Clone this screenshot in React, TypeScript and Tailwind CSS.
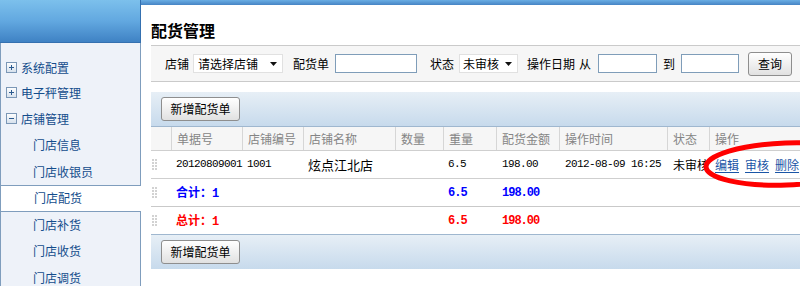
import React from 'react';

const CJK = "font-['Noto_Sans_CJK_SC','Noto_Sans',sans-serif]";
const MONO = "font-['Liberation_Mono',monospace]";

/** Small ⊞ / ⊟ tree toggle box. */
function Toggle({ open }: { open?: boolean }) {
  return (
    <svg width="11" height="11" viewBox="0 0 11 11" className="shrink-0">
      <defs>
        <linearGradient id={open ? 'tgo' : 'tgc'} x1="0" y1="0" x2="0" y2="1">
          <stop offset="0" stopColor="#ffffff" />
          <stop offset="1" stopColor="#d5e0ec" />
        </linearGradient>
      </defs>
      <rect x="0.5" y="0.5" width="10" height="10" fill={`url(#${open ? 'tgo' : 'tgc'})`} stroke="#7b97b6" />
      <rect x="3" y="5" width="5" height="1" fill="#2b5a8f" />
      {!open && <rect x="5" y="3" width="1" height="5" fill="#2b5a8f" />}
    </svg>
  );
}

function Grip() {
  const dots = [];
  for (let r = 0; r < 4; r++)
    for (let c = 0; c < 2; c++)
      dots.push(<rect key={`${r}-${c}`} x={c * 3} y={r * 3} width="2" height="2" fill="#d2d2d2" />);
  return (
    <svg width="5" height="11" viewBox="0 0 5 11" className="ml-[1px]">
      {dots}
    </svg>
  );
}

function Caret() {
  return (
    <svg width="7" height="4" viewBox="0 0 7 4" className="shrink-0">
      <path d="M0 0H7L3.5 4Z" fill="#111" />
    </svg>
  );
}

function Btn({ children, className = '' }: { children: React.ReactNode; className?: string }) {
  return (
    <div
      className={`flex h-[24px] items-center justify-center rounded-[3px] border border-[#8e8e8e] bg-gradient-to-b from-[#ffffff] to-[#e1e1e1] text-[12px] leading-none text-black ${className}`}
    >
      {children}
    </div>
  );
}

function Toolbar({ children }: { children: React.ReactNode }) {
  return (
    <div className="flex h-[34px] shrink-0 items-center bg-gradient-to-b from-[#e7eff6] to-[#c7daec] pl-[10px]">
      {children}
    </div>
  );
}

const SIDE_TOP = [
  { label: '系统配置', h: 'h-[25px]', open: false },
  { label: '电子秤管理', h: 'h-[25px]', open: false },
  { label: '店铺管理', h: 'h-[27px]', open: true },
];

const SIDE_SUB = ['门店信息', '门店收银员', '门店配货', '门店补货', '门店收货', '门店调货'];

const COLS = 'grid grid-cols-[20px_71px_61px_92px_48px_53px_63px_108px_42px_91px]';

const HEAD = ['', '单据号', '店铺编号', '店铺名称', '数量', '重量', '配货金额', '操作时间', '状态', '操作'];

export default function App() {
  return (
    <div className={`relative flex h-[286px] w-[800px] overflow-hidden bg-white ${CJK}`}>
      {/* Sidebar */}
      <aside className="flex w-[141px] shrink-0 flex-col">
        <div className="h-[43px] shrink-0 border-b border-r border-[#3470b0] bg-gradient-to-b from-[#7cc0ec] via-[#62a8e0] to-[#3f82c4]" />
        <div className="flex-1 shrink-0 border-l border-r border-[#7f9dbd] bg-[#eef2f9] pt-[12px] text-[12px] text-[#144d8c]">
          {SIDE_TOP.map((it) => (
            <div key={it.label} className={`flex ${it.h} items-center gap-[4px] pl-[5px]`}>
              <Toggle open={it.open} />
              <span className="leading-none">{it.label}</span>
            </div>
          ))}
          {SIDE_SUB.map((s) =>
            s === '门店配货' ? (
              <div
                key={s}
                className="relative -mr-px -ml-px flex h-[26.5px] items-center border-y border-l border-[#7f9dbd] bg-white pl-[33px]"
              >
                <span className="leading-none">{s}</span>
              </div>
            ) : (
              <div key={s} className="flex h-[26.5px] items-center pl-[32px]">
                <span className="leading-none">{s}</span>
              </div>
            ),
          )}
        </div>
      </aside>

      {/* Main */}
      <main className="flex flex-1 flex-col">
        <div className="h-[5px] shrink-0 bg-gradient-to-b from-[#6aaee4] to-[#4684c4]" />
        <div className="flex-1 bg-white pl-[10px]">
          <div className="flex h-[40px] items-center pt-[10px]">
            <h1 className="text-[16px] font-bold leading-none text-black">配货管理</h1>
          </div>

          {/* Filter row */}
          <div className="flex h-[37px] items-center border-y border-[#cacaca] bg-[#f6f6f6] pl-[14px] text-[12px] leading-none text-black">
            <span>店铺</span>
            <div className="ml-[4px] flex h-[19px] w-[90px] items-center justify-between border border-[#e1e1e1] bg-white pl-[4px] pr-[5px]">
              <span>请选择店铺</span>
              <Caret />
            </div>
            <span className="ml-[10px]">配货单</span>
            <div className="ml-[6px] h-[19px] w-[82px] border border-[#7f9db9] bg-white" />
            <span className="ml-[13px]">状态</span>
            <div className="ml-[5px] flex h-[19px] w-[59px] items-center justify-between border border-[#e1e1e1] bg-white pl-[3px] pr-[5px]">
              <span>未审核</span>
              <Caret />
            </div>
            <span className="ml-[9px]">操作日期</span>
            <span className="ml-[4px]">从</span>
            <div className="ml-[7px] h-[19px] w-[59px] border border-[#7f9db9] bg-white" />
            <span className="ml-[6px]">到</span>
            <div className="ml-[6px] h-[19px] w-[58px] border border-[#7f9db9] bg-white" />
            <Btn className="ml-[9px] w-[44px]">查询</Btn>
          </div>

          <div className="h-[10px]" />

          <Toolbar>
            <Btn className="w-[79px]">新增配货单</Btn>
          </Toolbar>

          {/* Table */}
          <div className="border-t border-[#9fb7cf] text-[12px] leading-none">
            <div className={`${COLS} h-[24px] border-b border-[#cfcfcf] bg-[#f6f6f6] text-[#858585]`}>
              {HEAD.map((h, i) => (
                <div key={i} className={`flex items-center pl-[5px] ${i > 0 ? 'border-l border-[#d6d6d6]' : ''}`}>
                  {h}
                </div>
              ))}
            </div>

            <div className={`${COLS} h-[28px] items-center border-b border-[#cfcfcf] text-black`}>
              <Grip />
              <div className={`pl-[5px] ${MONO} text-[11px] tracking-[-0.6px]`}>20120809001</div>
              <div className={`pl-[5px] ${MONO} text-[11px] tracking-[-0.6px]`}>1001</div>
              <div className="pl-[5px] text-[13px]">炫点江北店</div>
              <div />
              <div className={`pl-[5px] ${MONO} text-[11px] tracking-[-0.6px]`}>6.5</div>
              <div className={`pl-[6px] ${MONO} text-[11px] tracking-[-0.6px]`}>198.00</div>
              <div className={`pl-[6px] ${MONO} text-[11px] tracking-[-0.6px] whitespace-nowrap`}>2012-08-09 16:25</div>
              <div className="whitespace-nowrap pl-[6px]">未审核</div>
              <div className="flex gap-[6px] whitespace-nowrap pl-[6px] text-[#1a55a6] underline underline-offset-2">
                <span>编辑</span>
                <span>审核</span>
                <span>删除</span>
              </div>
            </div>

            <div className={`${COLS} h-[28px] items-center border-b border-[#c9c9c9] font-bold text-[#0000ff]`}>
              <Grip />
              <div className="whitespace-nowrap pl-[5px]">
                合计：<span className={MONO}>1</span>
              </div>
              <div />
              <div />
              <div />
              <div className={`pl-[5px] ${MONO} text-[12px] tracking-[-1px]`}>6.5</div>
              <div className={`pl-[6px] ${MONO} text-[12px] tracking-[-1px]`}>198.00</div>
            </div>

            <div className={`${COLS} h-[28px] items-center border-b border-[#9fb7cf] font-bold text-[#ff0000]`}>
              <Grip />
              <div className="whitespace-nowrap pl-[5px]">
                总计：<span className={MONO}>1</span>
              </div>
              <div />
              <div />
              <div />
              <div className={`pl-[5px] ${MONO} text-[12px] tracking-[-1px]`}>6.5</div>
              <div className={`pl-[6px] ${MONO} text-[12px] tracking-[-1px]`}>198.00</div>
            </div>
          </div>

          <Toolbar>
            <Btn className="w-[79px]">新增配货单</Btn>
          </Toolbar>
        </div>
      </main>

      {/* Red annotation ring */}
      <svg className="pointer-events-none absolute left-[690px] top-[130px]" width="110" height="70" viewBox="0 0 110 70">
        <ellipse cx="96" cy="34" rx="80" ry="21" fill="none" stroke="#ff0000" strokeWidth="5" transform="rotate(-2 96 34)" />
      </svg>
    </div>
  );
}
